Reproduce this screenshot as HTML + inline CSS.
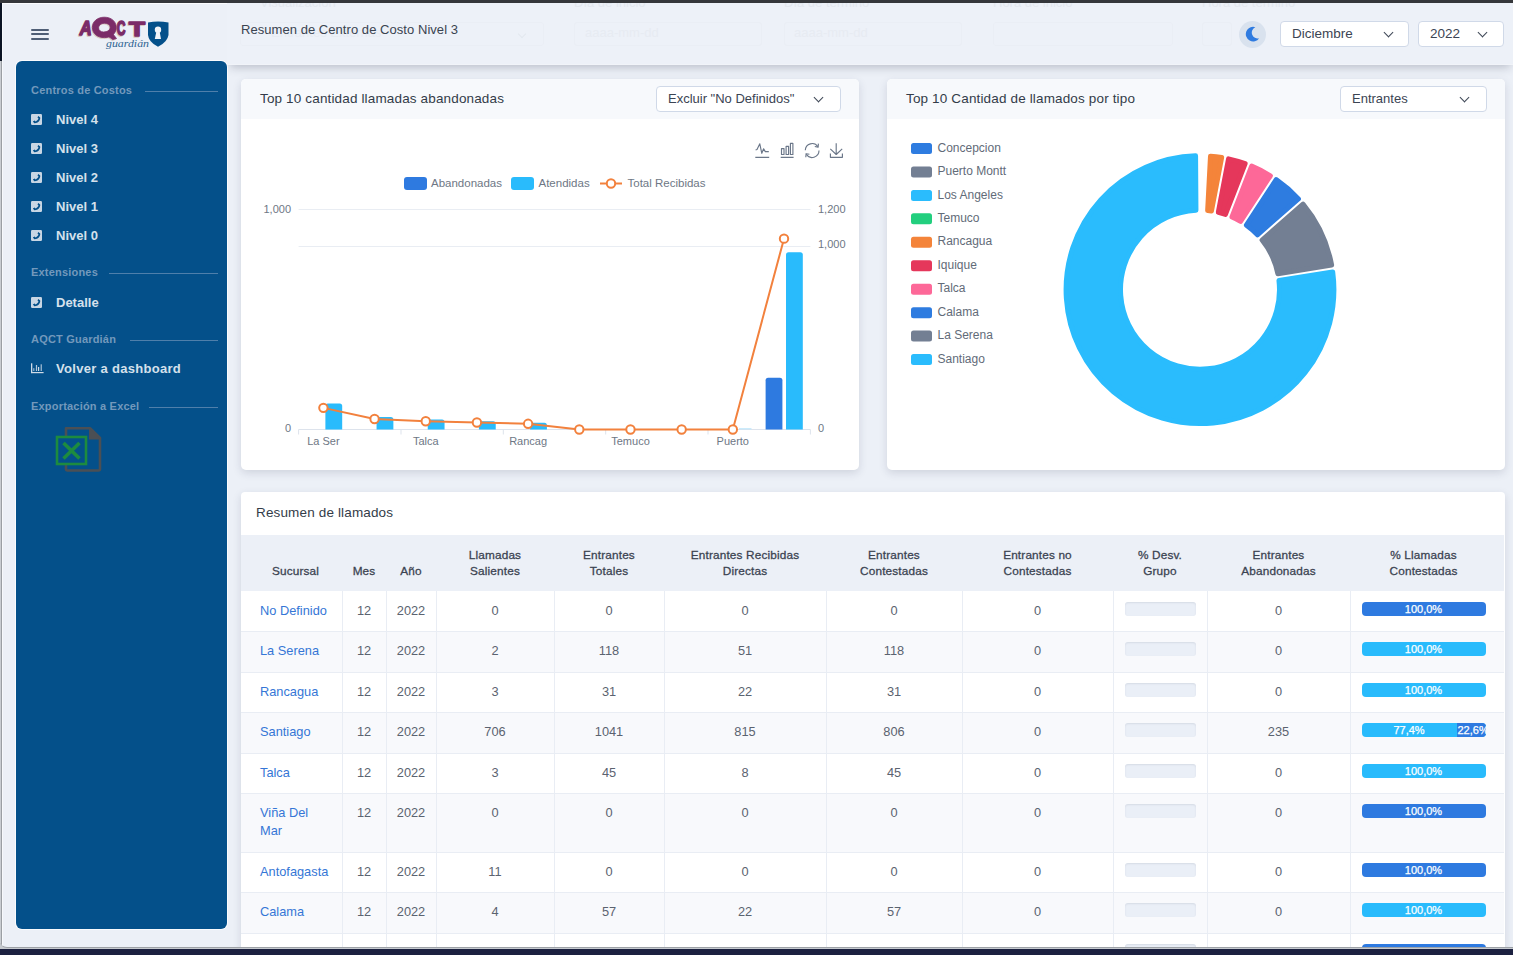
<!DOCTYPE html>
<html><head><meta charset="utf-8">
<style>
*{box-sizing:border-box;margin:0;padding:0}
html,body{width:1513px;height:955px;overflow:hidden;background:#1c2140;font-family:"Liberation Sans",sans-serif}
.abs{position:absolute}
#frameb{position:absolute;left:0;top:900px;width:1513px;height:49px;background:#c6cacf}
#win{position:absolute;left:0;top:3px;width:1513px;height:945px;background:#ecf0f7;border-bottom-left-radius:7px;overflow:hidden;border-bottom:1px solid #9da1a6}
#lb{position:absolute;left:0;top:0;width:3px;height:944px;background:linear-gradient(90deg,#c9cdd2 0,#c9cdd2 1px,#9b9fa4 1px,#9b9fa4 2px,#f7f9fc 2px)}
#lbt{position:absolute;left:0;top:0;width:2px;height:57.5px;background:#0b1424}
#topline{position:absolute;left:2px;top:0;width:1511px;height:1px;background:#fbfcfe}
#hdr{position:absolute;left:227px;top:0;width:1286px;height:62px;background:#edf1f8;border-bottom:1px solid #f1f4f9;box-shadow:0 5px 9px -3px rgba(30,40,60,.26);clip-path:inset(0 0 -30px 0)}
.ghost{position:absolute;color:#e3e8ef;font-size:13px;white-space:nowrap}
.title{position:absolute;font-size:13.5px;color:#333c49;white-space:nowrap;letter-spacing:.15px}
.sel{position:absolute;background:#fff;border:1px solid #d0d9e8;border-radius:4px;font-size:13.5px;color:#3b4453;white-space:nowrap}
.sel span{position:absolute;top:4px}
.chev{position:absolute;width:7px;height:7px;border-right:1.7px solid #3e4756;border-bottom:1.7px solid #3e4756;transform:rotate(45deg)}
#side{position:absolute;left:16px;top:58px;width:211px;height:868px;background:#04508a;border-radius:6px;box-shadow:0 0 0 1px rgba(255,255,255,.75)}
.sec{position:absolute;left:15px;font-size:11px;letter-spacing:.2px;font-weight:bold;color:#7399bc;white-space:nowrap}
.secl{position:absolute;height:1px;background:#4f7fab}
.item{position:absolute;left:40px;font-size:13px;font-weight:bold;color:#d5e1ec;white-space:nowrap}
.ico{position:absolute;left:15px;width:11px;height:11px}
.card{position:absolute;background:#fff;border-radius:5px;box-shadow:0 3px 9px rgba(40,50,80,.15);overflow:hidden}
.chd{position:absolute;left:0;top:0;right:0;height:40px;background:#f7f9fc}
table{position:absolute;left:0;top:43px;border-collapse:collapse;table-layout:fixed;width:1263px}
th{background:#ecf0f7;font-size:11.8px;letter-spacing:.15px;color:#3b4351;font-weight:normal;-webkit-text-stroke:.28px #3b4351;text-align:center;vertical-align:bottom;height:56px;padding:0 4px 12px;line-height:16px}
th:first-child{padding-left:12px}
th:last-child{padding-right:11px}
td{font-size:12.8px;color:#5b6370;text-align:center;vertical-align:top;border-right:1px solid #e9edf4;border-bottom:1px solid #e9edf4;padding:10.6px 4px 0;line-height:18px}
td:last-child{border-right:none}
tr.g td{background:#f8f9fc}
td.l{text-align:left;color:#3576d6;padding-left:19px}
.pb{margin:0.4px auto 0;width:71px;height:14px;background:#eaeff7;border-radius:3px;box-shadow:inset 0 1px 2px rgba(40,50,80,.1)}
.pc{margin:0.4px 0 0 7px;width:124px;height:14px;border-radius:4px;color:#fff;-webkit-text-stroke:.25px #fff;font-size:11px;line-height:14px;text-align:center;position:relative;overflow:hidden}
</style></head><body>
<div class="abs" style="left:0;top:0;width:1513px;height:3px;background:#35373b"></div>
<div id="frameb"></div>
<div id="win">
<div id="lb"></div><div id="lbt"></div><div id="topline"></div>

<!-- ghost form behind header -->
<div id="hdr"></div>
<div class="ghost" style="left:260px;top:-8px">Visualización</div>
<div class="ghost" style="left:574px;top:-8px">Día de inicio</div>
<div class="ghost" style="left:784px;top:-8px">Día de término</div>
<div class="ghost" style="left:993px;top:-8px">Hora de inicio</div>
<div class="ghost" style="left:1202px;top:-8px">Hora de término</div>
<div class="abs" style="left:240px;top:19px;width:304px;height:24px;border:1px solid #eaeef5;border-radius:3px"></div>
<div class="abs" style="left:574px;top:19px;width:188px;height:24px;border:1px solid #eaeef5;border-radius:3px"></div>
<div class="abs" style="left:784px;top:19px;width:178px;height:24px;border:1px solid #eaeef5;border-radius:3px"></div>
<div class="abs" style="left:993px;top:19px;width:180px;height:24px;border:1px solid #eaeef5;border-radius:3px"></div>
<div class="abs" style="left:1202px;top:19px;width:30px;height:24px;border:1px solid #eaeef5;border-radius:3px"></div>
<div class="abs" style="left:519px;top:28px;width:6px;height:6px;border-right:1.4px solid #e3e8ef;border-bottom:1.4px solid #e3e8ef;transform:rotate(45deg)"></div>
<div class="ghost" style="left:271px;top:22px;color:#e7ebf2">Entrantes Externas</div>
<div class="ghost" style="left:585px;top:22px;color:#e7ebf2">aaaa-mm-dd</div>
<div class="ghost" style="left:794px;top:22px;color:#e7ebf2">aaaa-mm-dd</div>

<!-- hamburger -->
<div class="abs" style="left:31px;top:26px;width:18px;height:2px;background:#4f5e76;border-radius:1px"></div>
<div class="abs" style="left:31px;top:30px;width:18px;height:2px;background:#4f5e76;border-radius:1px"></div>
<div class="abs" style="left:31px;top:35px;width:18px;height:2px;background:#4f5e76;border-radius:1px"></div>

<!-- logo: in svg -->
<!-- header title -->
<div class="title" style="left:241px;top:19px;color:#3a4350;font-size:13px;letter-spacing:.05px">Resumen de Centro de Costo Nivel 3</div>

<!-- moon -->
<div class="abs" style="left:1239px;top:18px;width:27px;height:27px;border-radius:50%;background:#d9e2ee"></div>
<svg class="abs" style="left:1244px;top:23px" width="17" height="17" viewBox="0 0 17 17"><path d="M11.3,1.2 A7.3,7.3 0 1 0 15.2,12.2 A5.85,5.85 0 0 1 11.3,1.2 Z" fill="#2f7be0"/></svg>

<!-- selects -->
<div class="sel" style="left:1280px;top:18px;width:129px;height:26px"><span style="left:11px">Diciembre</span><div class="chev" style="left:104px;top:6.5px"></div></div>
<div class="sel" style="left:1418px;top:18px;width:86px;height:26px"><span style="left:11px">2022</span><div class="chev" style="left:60px;top:6.5px"></div></div>

<!-- sidebar -->
<div id="side">
  <div class="sec" style="top:23px">Centros de Costos</div><div class="secl" style="left:129px;width:73px;top:30px"></div>
  <div class="ico" style="top:53px"><svg width="11" height="11" viewBox="0 0 11 11" style="display:block"><rect width="11" height="11" rx="1.2" fill="#c8d6e4"/><path d="M7.3,1.9 L9.2,3.6 C9.6,6.6 6.6,9.6 3.4,9.3 L1.8,7.5 L3.6,6.6 L4.5,7.5 C5.8,7 7,5.8 7.5,4.5 L6.5,3.6 Z" fill="#04508a"/></svg></div><div class="item" style="top:51px">Nivel 4</div>
  <div class="ico" style="top:82px"><svg width="11" height="11" viewBox="0 0 11 11" style="display:block"><rect width="11" height="11" rx="1.2" fill="#c8d6e4"/><path d="M7.3,1.9 L9.2,3.6 C9.6,6.6 6.6,9.6 3.4,9.3 L1.8,7.5 L3.6,6.6 L4.5,7.5 C5.8,7 7,5.8 7.5,4.5 L6.5,3.6 Z" fill="#04508a"/></svg></div><div class="item" style="top:80px">Nivel 3</div>
  <div class="ico" style="top:111px"><svg width="11" height="11" viewBox="0 0 11 11" style="display:block"><rect width="11" height="11" rx="1.2" fill="#c8d6e4"/><path d="M7.3,1.9 L9.2,3.6 C9.6,6.6 6.6,9.6 3.4,9.3 L1.8,7.5 L3.6,6.6 L4.5,7.5 C5.8,7 7,5.8 7.5,4.5 L6.5,3.6 Z" fill="#04508a"/></svg></div><div class="item" style="top:109px">Nivel 2</div>
  <div class="ico" style="top:140px"><svg width="11" height="11" viewBox="0 0 11 11" style="display:block"><rect width="11" height="11" rx="1.2" fill="#c8d6e4"/><path d="M7.3,1.9 L9.2,3.6 C9.6,6.6 6.6,9.6 3.4,9.3 L1.8,7.5 L3.6,6.6 L4.5,7.5 C5.8,7 7,5.8 7.5,4.5 L6.5,3.6 Z" fill="#04508a"/></svg></div><div class="item" style="top:138px">Nivel 1</div>
  <div class="ico" style="top:169px"><svg width="11" height="11" viewBox="0 0 11 11" style="display:block"><rect width="11" height="11" rx="1.2" fill="#c8d6e4"/><path d="M7.3,1.9 L9.2,3.6 C9.6,6.6 6.6,9.6 3.4,9.3 L1.8,7.5 L3.6,6.6 L4.5,7.5 C5.8,7 7,5.8 7.5,4.5 L6.5,3.6 Z" fill="#04508a"/></svg></div><div class="item" style="top:167px">Nivel 0</div>
  <div class="sec" style="top:205px">Extensiones</div><div class="secl" style="left:93px;width:109px;top:212px"></div>
  <div class="ico" style="top:236px"><svg width="11" height="11" viewBox="0 0 11 11" style="display:block"><rect width="11" height="11" rx="1.2" fill="#c8d6e4"/><path d="M7.3,1.9 L9.2,3.6 C9.6,6.6 6.6,9.6 3.4,9.3 L1.8,7.5 L3.6,6.6 L4.5,7.5 C5.8,7 7,5.8 7.5,4.5 L6.5,3.6 Z" fill="#04508a"/></svg></div><div class="item" style="top:234px">Detalle</div>
  <div class="sec" style="top:272px">AQCT Guardián</div><div class="secl" style="left:114px;width:88px;top:279px"></div>
  <div class="item" style="top:300px;letter-spacing:.3px">Volver a dashboard</div>
  <div class="sec" style="top:339px">Exportación a Excel</div><div class="secl" style="left:133px;width:69px;top:346px"></div>
</div>

<!-- cards -->
<div class="card" style="left:241px;top:76px;width:618px;height:391px">
  <div class="chd"></div>
  <div class="title" style="left:19px;top:12px">Top 10 cantidad llamadas abandonadas</div>
  <div class="sel" style="left:415px;top:7px;width:185px;height:26px;font-size:13px"><span style="left:11px">Excluir "No Definidos"</span><div class="chev" style="left:158px;top:6.5px"></div></div>
</div>
<div class="card" style="left:887px;top:76px;width:618px;height:391px">
  <div class="chd"></div>
  <div class="title" style="left:19px;top:12px">Top 10 Cantidad de llamados por tipo</div>
  <div class="sel" style="left:453px;top:7px;width:147px;height:26px;font-size:13px"><span style="left:11px">Entrantes</span><div class="chev" style="left:120px;top:6.5px"></div></div>
</div>

<div class="card" style="left:241px;top:489px;width:1264px;height:470px;border-radius:4px 4px 0 0">
  <div class="title" style="left:15px;top:13px">Resumen de llamados</div>
  <!--TABLE-->
<table>
<colgroup><col style="width:101px"><col style="width:44px"><col style="width:50px"><col style="width:118px"><col style="width:110px"><col style="width:162px"><col style="width:136px"><col style="width:151px"><col style="width:94px"><col style="width:143px"><col style="width:154px"></colgroup>
<tr><th>Sucursal</th><th>Mes</th><th>Año</th><th>Llamadas<br>Salientes</th><th>Entrantes<br>Totales</th><th>Entrantes Recibidas<br>Directas</th><th>Entrantes<br>Contestadas</th><th>Entrantes no<br>Contestadas</th><th>% Desv.<br>Grupo</th><th>Entrantes<br>Abandonadas</th><th>% Llamadas<br>Contestadas</th></tr>
<tr style="height:40px"><td class="l">No Definido</td><td>12</td><td>2022</td><td>0</td><td>0</td><td>0</td><td>0</td><td>0</td><td><div class="pb"></div></td><td>0</td><td><div class="pc" style="background:#2e7ae0">100,0%</div></td></tr>
<tr class="g" style="height:41px"><td class="l">La Serena</td><td>12</td><td>2022</td><td>2</td><td>118</td><td>51</td><td>118</td><td>0</td><td><div class="pb"></div></td><td>0</td><td><div class="pc" style="background:#29bbfc">100,0%</div></td></tr>
<tr style="height:40px"><td class="l">Rancagua</td><td>12</td><td>2022</td><td>3</td><td>31</td><td>22</td><td>31</td><td>0</td><td><div class="pb"></div></td><td>0</td><td><div class="pc" style="background:#29bbfc">100,0%</div></td></tr>
<tr class="g" style="height:41px"><td class="l">Santiago</td><td>12</td><td>2022</td><td>706</td><td>1041</td><td>815</td><td>806</td><td>0</td><td><div class="pb"></div></td><td>235</td><td><div class="pc" style="background:#29bbfc;text-align:left"><span style="position:absolute;left:0;width:95px;text-align:center">77,4%</span><span style="position:absolute;left:95px;top:0;width:29px;height:14px;background:#2e7ae0;padding-left:1px">22,6%</span></div></td></tr>
<tr style="height:40px"><td class="l">Talca</td><td>12</td><td>2022</td><td>3</td><td>45</td><td>8</td><td>45</td><td>0</td><td><div class="pb"></div></td><td>0</td><td><div class="pc" style="background:#29bbfc">100,0%</div></td></tr>
<tr class="g" style="height:59px"><td class="l">Viña Del<br>Mar</td><td>12</td><td>2022</td><td>0</td><td>0</td><td>0</td><td>0</td><td>0</td><td><div class="pb"></div></td><td>0</td><td><div class="pc" style="background:#2e7ae0">100,0%</div></td></tr>
<tr style="height:40px"><td class="l">Antofagasta</td><td>12</td><td>2022</td><td>11</td><td>0</td><td>0</td><td>0</td><td>0</td><td><div class="pb"></div></td><td>0</td><td><div class="pc" style="background:#2e7ae0">100,0%</div></td></tr>
<tr class="g" style="height:41px"><td class="l">Calama</td><td>12</td><td>2022</td><td>4</td><td>57</td><td>22</td><td>57</td><td>0</td><td><div class="pb"></div></td><td>0</td><td><div class="pc" style="background:#29bbfc">100,0%</div></td></tr>
<tr style="height:40px"><td class="l">Concepcion</td><td>12</td><td>2022</td><td>0</td><td>0</td><td>0</td><td>0</td><td>0</td><td><div class="pb"></div></td><td>0</td><td><div class="pc" style="background:#2e7ae0">100,0%</div></td></tr>
</table>
<!--/TABLE-->
</div>

<!--CHARTS-->
<svg class="abs" style="left:0;top:-3px" width="1513" height="955" viewBox="0 0 1513 955" font-family="Liberation Sans, sans-serif">
<line x1="298.6" y1="209.5" x2="810.4" y2="209.5" stroke="#e9edf3" stroke-width="1"/>
<line x1="298.6" y1="246.5" x2="810.4" y2="246.5" stroke="#e9edf3" stroke-width="1"/>
<line x1="298.6" y1="429.5" x2="810.4" y2="429.5" stroke="#dde3ec" stroke-width="1"/>
<line x1="298.6" y1="429.5" x2="298.6" y2="434.5" stroke="#dde3ec" stroke-width="1"/>
<line x1="401.0" y1="429.5" x2="401.0" y2="434.5" stroke="#dde3ec" stroke-width="1"/>
<line x1="503.3" y1="429.5" x2="503.3" y2="434.5" stroke="#dde3ec" stroke-width="1"/>
<line x1="605.7" y1="429.5" x2="605.7" y2="434.5" stroke="#dde3ec" stroke-width="1"/>
<line x1="708.0" y1="429.5" x2="708.0" y2="434.5" stroke="#dde3ec" stroke-width="1"/>
<line x1="810.4" y1="429.5" x2="810.4" y2="434.5" stroke="#dde3ec" stroke-width="1"/>
<g font-size="11" fill="#6e7785">
<text x="291" y="213" text-anchor="end">1,000</text>
<text x="291" y="432" text-anchor="end">0</text>
<text x="818" y="213">1,200</text>
<text x="818" y="248.3">1,000</text>
<text x="818" y="432">0</text>
<text x="323.4" y="445" text-anchor="middle">La Ser</text>
<text x="425.8" y="445" text-anchor="middle">Talca</text>
<text x="528.1" y="445" text-anchor="middle">Rancag</text>
<text x="630.5" y="445" text-anchor="middle">Temuco</text>
<text x="732.8" y="445" text-anchor="middle">Puerto</text>
</g>

<path d="M325.39,429.5 L325.39,406.04 Q325.39,403.54 327.89,403.54 L339.69,403.54 Q342.19,403.54 342.19,406.04 L342.19,429.5 Z" fill="#29bbfc"/>

<path d="M376.57,429.5 L376.57,419.46 Q376.57,416.96 379.07,416.96 L390.87,416.96 Q393.37,416.96 393.37,419.46 L393.37,429.5 Z" fill="#29bbfc"/>

<path d="M427.75,429.5 L427.75,422.10 Q427.75,419.60 430.25,419.60 L442.05,419.60 Q444.55,419.60 444.55,422.10 L444.55,429.5 Z" fill="#29bbfc"/>

<path d="M478.93,429.5 L478.93,423.86 Q478.93,421.36 481.43,421.36 L493.23,421.36 Q495.73,421.36 495.73,423.86 L495.73,429.5 Z" fill="#29bbfc"/>

<path d="M530.11,429.5 L530.11,425.18 Q530.11,422.68 532.61,422.68 L544.41,422.68 Q546.91,422.68 546.91,425.18 L546.91,429.5 Z" fill="#29bbfc"/>








<path d="M765.61,429.5 L765.61,380.30 Q765.61,377.80 768.11,377.80 L779.91,377.80 Q782.41,377.80 782.41,380.30 L782.41,429.5 Z" fill="#2e7ae0"/>
<path d="M786.01,429.5 L786.01,254.68 Q786.01,252.18 788.51,252.18 L800.31,252.18 Q802.81,252.18 802.81,254.68 L802.81,429.5 Z" fill="#29bbfc"/>
<line x1="739" y1="428.8" x2="751.5" y2="428.8" stroke="#bfe6fb" stroke-width="1.2"/>
<polyline points="323.39,407.87 374.57,419.05 425.75,421.25 476.93,422.53 528.11,423.82 579.29,429.50 630.47,429.50 681.65,429.50 732.83,429.50 784.01,238.65" fill="none" stroke="#f2813d" stroke-width="2" stroke-linejoin="round"/>
<circle cx="323.39" cy="407.87" r="4.2" fill="#fff" stroke="#f2813d" stroke-width="2"/>
<circle cx="374.57" cy="419.05" r="4.2" fill="#fff" stroke="#f2813d" stroke-width="2"/>
<circle cx="425.75" cy="421.25" r="4.2" fill="#fff" stroke="#f2813d" stroke-width="2"/>
<circle cx="476.93" cy="422.53" r="4.2" fill="#fff" stroke="#f2813d" stroke-width="2"/>
<circle cx="528.11" cy="423.82" r="4.2" fill="#fff" stroke="#f2813d" stroke-width="2"/>
<circle cx="579.29" cy="429.50" r="4.2" fill="#fff" stroke="#f2813d" stroke-width="2"/>
<circle cx="630.47" cy="429.50" r="4.2" fill="#fff" stroke="#f2813d" stroke-width="2"/>
<circle cx="681.65" cy="429.50" r="4.2" fill="#fff" stroke="#f2813d" stroke-width="2"/>
<circle cx="732.83" cy="429.50" r="4.2" fill="#fff" stroke="#f2813d" stroke-width="2"/>
<circle cx="784.01" cy="238.65" r="4.2" fill="#fff" stroke="#f2813d" stroke-width="2"/>
<rect x="404" y="177" width="23" height="13" rx="3" fill="#2e7ae0"/>
<text x="431" y="187" font-size="11.5" fill="#6e7785">Abandonadas</text>
<rect x="511" y="177" width="23" height="13" rx="3" fill="#29bbfc"/>
<text x="538.5" y="187" font-size="11.5" fill="#6e7785">Atendidas</text>
<line x1="600" y1="183.5" x2="622" y2="183.5" stroke="#f2813d" stroke-width="2"/>
<circle cx="611" cy="183.5" r="4.2" fill="#fff" stroke="#f2813d" stroke-width="2"/>
<text x="627.5" y="187" font-size="11.5" fill="#6e7785">Total Recibidas</text>
<g fill="none" stroke="#6b7789" stroke-width="1.15" stroke-linejoin="round">
<path d="M755.3,157.3 H769.2"/><path d="M755.6,150 L757,149.5 L759.8,143.8 L761.8,153.3 L763.6,148.8 L765.3,151.6 H768.8"/>
<path d="M780.7,157.3 H793.6"/><rect x="781.5" y="148.6" width="2.5" height="5.9"/><rect x="786.1" y="146.3" width="2.5" height="8.2"/><rect x="790.4" y="143.4" width="2.5" height="11.1"/>
<path d="M805.3,150.2 A6.9,6.9 0 0 1 817.9,146.6"/><path d="M819,150.6 A6.9,6.9 0 0 1 806.3,154.3"/><path d="M818.4,143.6 L818.1,147.1 L814.8,146.5"/><path d="M805.8,157.2 L806.1,153.7 L809.4,154.3"/>
<path d="M836.2,143.3 V154.5 M830.3,148.9 L836.2,154.5 L842.2,148.9 M830.4,153.5 V157.3 H842.4 V153.5"/>
</g>
<path d="M1210.50,156.21 A133.90,133.90 0 0 1 1221.64,157.56 L1211.45,211.03 A79.50,79.50 0 0 0 1207.65,210.57 Z" fill="#f4843a" stroke="#f4843a" stroke-width="5" stroke-linejoin="round"/>
<path d="M1228.52,158.87 A133.90,133.90 0 0 1 1245.14,163.64 L1225.46,214.39 A79.50,79.50 0 0 0 1218.32,212.34 Z" fill="#e5375b" stroke="#e5375b" stroke-width="5" stroke-linejoin="round"/>
<path d="M1251.67,166.17 A133.90,133.90 0 0 1 1270.37,175.78 L1240.56,221.33 A79.50,79.50 0 0 0 1231.98,216.92 Z" fill="#fd6898" stroke="#fd6898" stroke-width="5" stroke-linejoin="round"/>
<path d="M1276.22,179.61 A133.90,133.90 0 0 1 1298.41,198.90 L1257.45,234.75 A79.50,79.50 0 0 0 1246.42,225.16 Z" fill="#2e7ce0" stroke="#2e7ce0" stroke-width="5" stroke-linejoin="round"/>
<path d="M1303.02,204.16 A133.90,133.90 0 0 1 1331.62,265.07 L1277.87,273.68 A79.50,79.50 0 0 0 1262.06,240.02 Z" fill="#737f93" stroke="#737f93" stroke-width="5" stroke-linejoin="round"/>
<path d="M1332.72,271.99 A133.90,133.90 0 1 1 1195.57,155.87 L1195.95,210.30 A79.50,79.50 0 1 0 1278.98,280.59 Z" fill="#2abcfd" stroke="#2abcfd" stroke-width="5" stroke-linejoin="round"/>
<rect x="911" y="143.00" width="21" height="11" rx="2.5" fill="#2e7ce0"/>
<text x="937.5" y="151.60" font-size="12" fill="#626b78">Concepcion</text>
<rect x="911" y="166.45" width="21" height="11" rx="2.5" fill="#737f93"/>
<text x="937.5" y="175.05" font-size="12" fill="#626b78">Puerto Montt</text>
<rect x="911" y="189.90" width="21" height="11" rx="2.5" fill="#2abcfd"/>
<text x="937.5" y="198.50" font-size="12" fill="#626b78">Los Angeles</text>
<rect x="911" y="213.35" width="21" height="11" rx="2.5" fill="#22cf7e"/>
<text x="937.5" y="221.95" font-size="12" fill="#626b78">Temuco</text>
<rect x="911" y="236.80" width="21" height="11" rx="2.5" fill="#f4843a"/>
<text x="937.5" y="245.40" font-size="12" fill="#626b78">Rancagua</text>
<rect x="911" y="260.25" width="21" height="11" rx="2.5" fill="#e5375b"/>
<text x="937.5" y="268.85" font-size="12" fill="#626b78">Iquique</text>
<rect x="911" y="283.70" width="21" height="11" rx="2.5" fill="#fd6898"/>
<text x="937.5" y="292.30" font-size="12" fill="#626b78">Talca</text>
<rect x="911" y="307.15" width="21" height="11" rx="2.5" fill="#2e7ce0"/>
<text x="937.5" y="315.75" font-size="12" fill="#626b78">Calama</text>
<rect x="911" y="330.60" width="21" height="11" rx="2.5" fill="#737f93"/>
<text x="937.5" y="339.20" font-size="12" fill="#626b78">La Serena</text>
<rect x="911" y="354.05" width="21" height="11" rx="2.5" fill="#2abcfd"/>
<text x="937.5" y="362.65" font-size="12" fill="#626b78">Santiago</text>
<g><path d="M66,428.2 H90 L100,438 V469 Q100,470.5 98.5,470.5 H67.5 Q66,470.5 66,469 Z" fill="none" stroke="#4b4f54" stroke-width="2.6" stroke-linejoin="round"/><path d="M89,428 L100.5,439.5 L89,439.5 Z" fill="#4b4f54"/><rect x="57" y="437" width="29" height="27" fill="#04508a" stroke="#1d8b3f" stroke-width="2.6"/><path d="M63.5,443 L79.5,458.5 M79.5,443 L63.5,458.5" stroke="#1d8b3f" stroke-width="3.6"/></g>
<g transform="translate(-0.8,0.9)" fill="#d6c6bd" stroke="#d6c6bd" stroke-width="1.6" stroke-linejoin="round" font-weight="bold">
<text x="79.8" y="35.3" font-size="20" font-style="italic" textLength="12" lengthAdjust="spacingAndGlyphs">A</text>
<path fill-rule="evenodd" stroke-width="0.8" d="M104.3,17.2 C111.3,17.2 116.3,21.5 116.3,27.5 C116.3,33.5 111.3,37.6 104.3,37.6 C97.3,37.6 92.4,33.5 92.4,27.5 C92.4,21.5 97.3,17.2 104.3,17.2 Z M104.5,23.2 C101,23.2 98.6,25.2 98.6,27.8 C98.6,30.4 100.7,32 103.6,32 C107.4,32 110.2,30 110.2,27.3 C110.2,24.8 107.8,23.2 104.5,23.2 Z"/>
<path stroke-width="0.8" d="M104.5,33.5 L112.8,39.6 L116.5,38.5 L111.5,32.2 Z"/>
<text x="116.8" y="35.4" font-size="20" textLength="8.8" lengthAdjust="spacingAndGlyphs">C</text>
<text x="129" y="35.7" font-size="21" textLength="16" lengthAdjust="spacingAndGlyphs">T</text>
</g>
<g transform="translate(0,0)" fill="#7b2c68" stroke="#7b2c68" stroke-width="1.6" stroke-linejoin="round" font-weight="bold">
<text x="79.8" y="35.3" font-size="20" font-style="italic" textLength="12" lengthAdjust="spacingAndGlyphs">A</text>
<path fill-rule="evenodd" stroke-width="0.8" d="M104.3,17.2 C111.3,17.2 116.3,21.5 116.3,27.5 C116.3,33.5 111.3,37.6 104.3,37.6 C97.3,37.6 92.4,33.5 92.4,27.5 C92.4,21.5 97.3,17.2 104.3,17.2 Z M104.5,23.2 C101,23.2 98.6,25.2 98.6,27.8 C98.6,30.4 100.7,32 103.6,32 C107.4,32 110.2,30 110.2,27.3 C110.2,24.8 107.8,23.2 104.5,23.2 Z"/>
<path stroke-width="0.8" d="M104.5,33.5 L112.8,39.6 L116.5,38.5 L111.5,32.2 Z"/>
<text x="116.8" y="35.4" font-size="20" textLength="8.8" lengthAdjust="spacingAndGlyphs">C</text>
<text x="129" y="35.7" font-size="21" textLength="16" lengthAdjust="spacingAndGlyphs">T</text>
</g>
<text x="106" y="47.3" font-size="10.5" font-style="italic" font-family="Liberation Serif, serif" fill="#2d6391" textLength="43" lengthAdjust="spacingAndGlyphs">guardián</text>
<path d="M148,22.5 Q158,20.5 168.5,22.5 L168.5,35 Q167.5,42 158,46.8 Q148.5,42 148,35 Z" fill="#04508a"/>
<circle cx="158" cy="29.8" r="3.2" fill="#f2f4f8"/><path d="M156.5,31 L154.8,39 L161,39 L159.5,31 Z" fill="#f2f4f8"/>
<g fill="#cfdbe7"><rect x="31" y="363.3" width="1.3" height="9.8"/><rect x="31" y="372" width="12.6" height="1.2"/><rect x="33.2" y="368.2" width="1.2" height="2.8" opacity=".75"/><rect x="35.9" y="365" width="1.2" height="6" opacity=".85"/><rect x="38" y="367" width="1.2" height="4"/><rect x="40.6" y="364.3" width="1.3" height="6.7" opacity=".75"/></g>
</svg>
<!--/CHARTS-->
</div>
</body></html>
